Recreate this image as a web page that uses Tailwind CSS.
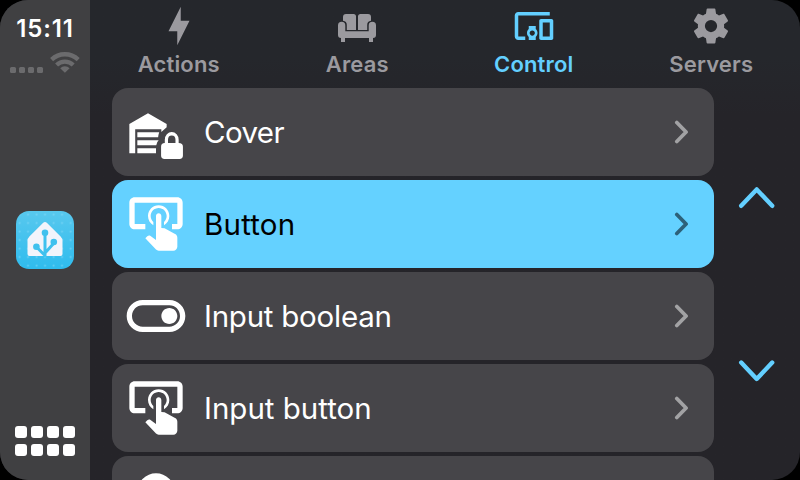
<!DOCTYPE html>
<html lang="en">
<head>
<meta charset="utf-8">
<title>Control</title>
<script src="https://cdn.jsdelivr.net/npm/@tailwindcss/browser@4"></script>
</head>
<body class="bg-black">
<svg class="hidden">
  <symbol id="tap" viewBox="0 0 24 24"><path d="M13 5C15.21 5 17 6.79 17 9C17 10.5 16.2 11.77 15 12.46V11.24C15.61 10.69 16 9.89 16 9C16 7.34 14.66 6 13 6S10 7.34 10 9C10 9.89 10.39 10.69 11 11.24V12.46C9.8 11.77 9 10.5 9 9C9 6.79 10.79 5 13 5M20 20.5C19.97 21.32 19.32 21.97 18.5 22H13C12.62 22 12.26 21.85 12 21.57L8 17.37L8.74 16.6C8.93 16.39 9.2 16.28 9.5 16.28H9.7L12 18V9C12 8.45 12.45 8 13 8S14 8.45 14 9V13.47L15.21 13.6L19.15 15.79C19.68 16.03 20 16.56 20 17.14V20.5M20 2H4C2.9 2 2 2.9 2 4V12C2 13.11 2.9 14 4 14H8V12H4V4H20V12H18V14H20C21.1 14 22 13.1 22 12V4C22 2.9 21.11 2 20 2Z"/></symbol>
  <symbol id="chev" viewBox="0 0 16 24"><path d="M2.8 2.5L12.1 12L2.8 21.5" fill="none" stroke="currentColor" stroke-width="3.7" stroke-linecap="round" stroke-linejoin="round"/></symbol>
</svg>
<div class="flex h-[480px] w-[800px] overflow-hidden rounded-[28px] bg-linear-to-b from-[#25272c] from-[12%] to-[#252429] to-[24%] font-['Inter','Noto_Sans',sans-serif]">
  <aside class="flex w-[90px] shrink-0 flex-col items-center bg-[#404042]">
    <div class="mt-[13px] h-8 text-[24px] leading-8 font-semibold tracking-[0.9px] whitespace-nowrap text-white">15:11</div>
    <div class="flex h-[30px] w-[70px] items-end justify-between text-[#6b6b6d]">
      <div class="mb-[2px] flex gap-[3px]">
        <i class="size-[6px] rounded-[1.5px] bg-current"></i><i class="size-[6px] rounded-[1.5px] bg-current"></i><i class="size-[6px] rounded-[1.5px] bg-current"></i><i class="size-[6px] rounded-[1.5px] bg-current"></i>
      </div>
      <svg class="mb-[1px] h-[24px] w-[30px]" viewBox="0 0 30 24" fill="none" stroke="currentColor" stroke-width="4.3"><path d="M1.6 9.6A19.2 19.2 0 0 1 28.2 9.6M6.6 15A12 12 0 0 1 23.2 15"/><path d="M14.9 22.8L10.2 18.3A6.6 6.6 0 0 1 19.6 18.3Z" fill="currentColor" stroke="none"/></svg>
    </div>
    <svg class="mt-[136px] size-[58px]" viewBox="0 0 58 58">
      <defs>
        <linearGradient id="sky" x1="0" y1="0" x2="0" y2="1"><stop stop-color="#58c8ee"/><stop offset="1" stop-color="#2fbcee"/></linearGradient>
        <pattern id="dots" width="8.5" height="8.5" patternUnits="userSpaceOnUse"><path d="M3.6 2.4V4.8M2.4 3.6H4.8" stroke="#8edcf7" stroke-opacity=".5" stroke-width=".8"/></pattern>
      </defs>
      <rect width="58" height="58" rx="13" fill="url(#sky)"/><rect width="58" height="58" rx="13" fill="url(#dots)"/>
      <path d="M27.2 11.8Q29 10 30.8 11.8L44.6 25.6Q46.5 27.5 46.5 30V43Q46.5 45 44.5 45H13.5Q11.5 45 11.5 43V30Q11.5 27.5 13.4 25.6Z" fill="#f2f4fb"/>
      <g stroke="#3fc1ee" stroke-width="3" fill="none"><path d="M29 22V45.5M29 42L38 32M20.5 36L29.5 45"/></g>
      <g fill="#3fc1ee"><circle cx="29" cy="21.8" r="3.3"/><circle cx="37.8" cy="31" r="3.3"/><circle cx="20.4" cy="35.7" r="3.3"/></g>
    </svg>
    <div class="mt-[157px] grid grid-cols-4 gap-x-1 gap-y-[6px]">
      <i class="size-3 rounded-[3px] bg-white"></i><i class="size-3 rounded-[3px] bg-white"></i><i class="size-3 rounded-[3px] bg-white"></i><i class="size-3 rounded-[3px] bg-white"></i>
      <i class="size-3 rounded-[3px] bg-white"></i><i class="size-3 rounded-[3px] bg-white"></i><i class="size-3 rounded-[3px] bg-white"></i><i class="size-3 rounded-[3px] bg-white"></i>
    </div>
  </aside>
  <main class="flex w-[710px] flex-col">
    <nav class="grid h-[88px] shrink-0 grid-cols-4 pt-[5px] text-[22px] leading-7 font-semibold tracking-[0.15px] text-[#9b9a9f]">
      <div class="flex flex-col items-center gap-[3px]">
        <svg class="size-[42px]" viewBox="0 0 24 24" fill="currentColor"><path d="M11 15H6L13 1V9H18L11 23V15Z"/></svg>
        <span>Actions</span>
      </div>
      <div class="flex flex-col items-center gap-[3px]">
        <svg class="ml-[2px] size-[42px]" viewBox="0 0 42 42" fill="currentColor"><path d="M10 9H17.5Q20 9 20 11.5V25H10.8V20Q10.8 16.2 7 15.8V12Q7 9 10 9ZM24.5 9H32Q35 9 35 12V15.8Q31.2 16.2 31.2 20V25H22V11.5Q22 9 24.5 9ZM2 20.5A3.6 3.6 0 0 1 9.3 20.5V26.3H32.7V20.5A3.6 3.6 0 0 1 40 20.5V30Q40 33 37 33V37H33V33H9V37H5V33Q2 33 2 30Z"/></svg>
        <span class="ml-[2px]">Areas</span>
      </div>
      <div class="flex flex-col items-center gap-[3px] text-[#63cfff]">
        <svg class="size-[42px]" viewBox="0 0 24 24" fill="currentColor"><path d="M3 6h18V4H3c-1.1 0-2 .9-2 2v12c0 1.1.9 2 2 2h4v-2H3V6zm10 6H9v1.78c-.61.55-1 1.33-1 2.22s.39 1.67 1 2.22V20h4v-1.78c.61-.55 1-1.34 1-2.22s-.39-1.67-1-2.22V12zm-2 5.5c-.83 0-1.5-.67-1.5-1.5s.67-1.5 1.5-1.5 1.5.67 1.5 1.5-.67 1.5-1.5 1.5zM22 8h-6c-.5 0-1 .5-1 1v10c0 .5.5 1 1 1h6c.5 0 1-.5 1-1V9c0-.5-.5-1-1-1zm-1 10h-4v-8h4v8z"/></svg>
        <span>Control</span>
      </div>
      <div class="flex flex-col items-center gap-[3px]">
        <svg class="size-[42px]" viewBox="0 0 24 24" fill="currentColor"><path d="M12 15.5A3.5 3.5 0 0 1 8.5 12 3.5 3.5 0 0 1 12 8.5a3.5 3.5 0 0 1 3.5 3.5 3.5 3.5 0 0 1-3.5 3.5m7.43-2.53c.04-.32.07-.64.07-.97s-.03-.66-.07-1l2.11-1.63c.19-.15.24-.42.12-.64l-2-3.46c-.12-.22-.39-.31-.61-.22l-2.49 1c-.52-.39-1.06-.73-1.69-.98l-.37-2.65A.506.506 0 0 0 14 2h-4c-.25 0-.46.18-.5.42l-.37 2.65c-.63.25-1.17.59-1.69.98l-2.49-1c-.22-.09-.49 0-.61.22l-2 3.46c-.13.22-.07.49.12.64L4.57 11c-.04.34-.07.67-.07 1s.03.65.07.97l-2.11 1.66c-.19.15-.25.42-.12.64l2 3.46c.12.22.39.3.61.22l2.49-1.01c.52.4 1.06.74 1.69.99l.37 2.65c.04.24.25.42.5.42h4c.25 0 .46-.18.5-.42l.37-2.65c.63-.26 1.17-.59 1.69-.99l2.49 1.01c.22.08.49 0 .61-.22l2-3.46c.12-.22.07-.49-.12-.64z"/></svg>
        <span>Servers</span>
      </div>
    </nav>
    <div class="flex h-[392px] overflow-hidden pl-[22px]">
      <div class="flex w-[602px] shrink-0 flex-col gap-1 text-[29.5px] leading-10 tracking-[-0.25px] text-white">
        <div class="flex h-[88px] shrink-0 items-center rounded-[16px] bg-[#464549] pr-[24px] pl-3">
          <svg class="size-16" viewBox="0 0 24 24" fill="currentColor"><path d="M9 5L2 9V20H4.2V11H14V12L16 10.2V9ZM5 12.1H13.2Q12.9 13 12.8 14H5ZM5 15.1H13Q12.2 15.8 12.1 17H5ZM5 18.1H12V20H5ZM15.3 16.1V14.9A2.6 2.9 0 0 1 20.5 14.9V16.1Q22.1 16.1 22.1 17.5V20.8Q22.1 22.1 20.8 22.1H15.2Q13.9 22.1 13.9 20.8V17.5Q13.9 16.1 15.3 16.1ZM16.5 16.1H19.3V14.9A1.4 1.6 0 0 0 16.5 14.9Z"/></svg>
          <span class="ml-4 flex-1 tracking-[-0.6px]">Cover</span>
          <svg class="h-6 w-4 text-[#a2a2a4]"><use href="#chev"/></svg>
        </div>
        <div class="flex h-[88px] shrink-0 items-center rounded-[16px] bg-[#64d1ff] pr-[24px] pl-3">
          <svg class="size-16 text-white" fill="currentColor"><use href="#tap"/></svg>
          <span class="ml-4 flex-1 tracking-[0.2px] text-black">Button</span>
          <svg class="h-6 w-4 text-[#2d6179]"><use href="#chev"/></svg>
        </div>
        <div class="flex h-[88px] shrink-0 items-center rounded-[16px] bg-[#464549] pr-[24px] pl-3">
          <svg class="size-16" viewBox="0 0 24 24" fill="currentColor"><path d="M17 6H7c-3.31 0-6 2.69-6 6s2.69 6 6 6h10c3.31 0 6-2.69 6-6s-2.69-6-6-6zm0 10H7c-2.21 0-4-1.79-4-4s1.79-4 4-4h10c2.21 0 4 1.79 4 4s-1.79 4-4 4zm0-7c-1.66 0-3 1.34-3 3s1.34 3 3 3 3-1.34 3-3-1.34-3-3-3z"/></svg>
          <span class="ml-4 flex-1">Input boolean</span>
          <svg class="h-6 w-4 text-[#a2a2a4]"><use href="#chev"/></svg>
        </div>
        <div class="flex h-[88px] shrink-0 items-center rounded-[16px] bg-[#464549] pr-[24px] pl-3">
          <svg class="size-16" fill="currentColor"><use href="#tap"/></svg>
          <span class="ml-4 flex-1 tracking-[0px]">Input button</span>
          <svg class="h-6 w-4 text-[#a2a2a4]"><use href="#chev"/></svg>
        </div>
        <div class="flex h-[88px] shrink-0 items-center rounded-[16px] bg-[#464549] pr-[24px] pl-3">
          <svg class="size-16" viewBox="0 0 24 24" fill="currentColor"><path d="M12 2A7 7 0 0 0 5 9C5 11.38 6.19 13.47 8 14.74V17A1 1 0 0 0 9 18H15A1 1 0 0 0 16 17V14.74C17.81 13.47 19 11.38 19 9A7 7 0 0 0 12 2M9 21A1 1 0 0 0 10 22H14A1 1 0 0 0 15 21V20H9V21Z"/></svg>
        </div>
      </div>
      <div class="flex w-[86px] flex-col items-center gap-[147px] pt-[98px] text-[#63cfff]">
        <svg class="h-[24px] w-[40px]" viewBox="0 0 40 24" fill="none" stroke="currentColor" stroke-width="4.4" stroke-linecap="round" stroke-linejoin="round"><path d="M4.2 19.8L19.7 3.4L35.2 19.8"/></svg>
        <svg class="h-[28px] w-[40px]" viewBox="0 0 40 28" fill="none" stroke="currentColor" stroke-width="4.4" stroke-linecap="round" stroke-linejoin="round"><path d="M4.2 5.6L19.7 22L35.2 5.6"/></svg>
      </div>
    </div>
  </main>
</div>
</body>
</html>
